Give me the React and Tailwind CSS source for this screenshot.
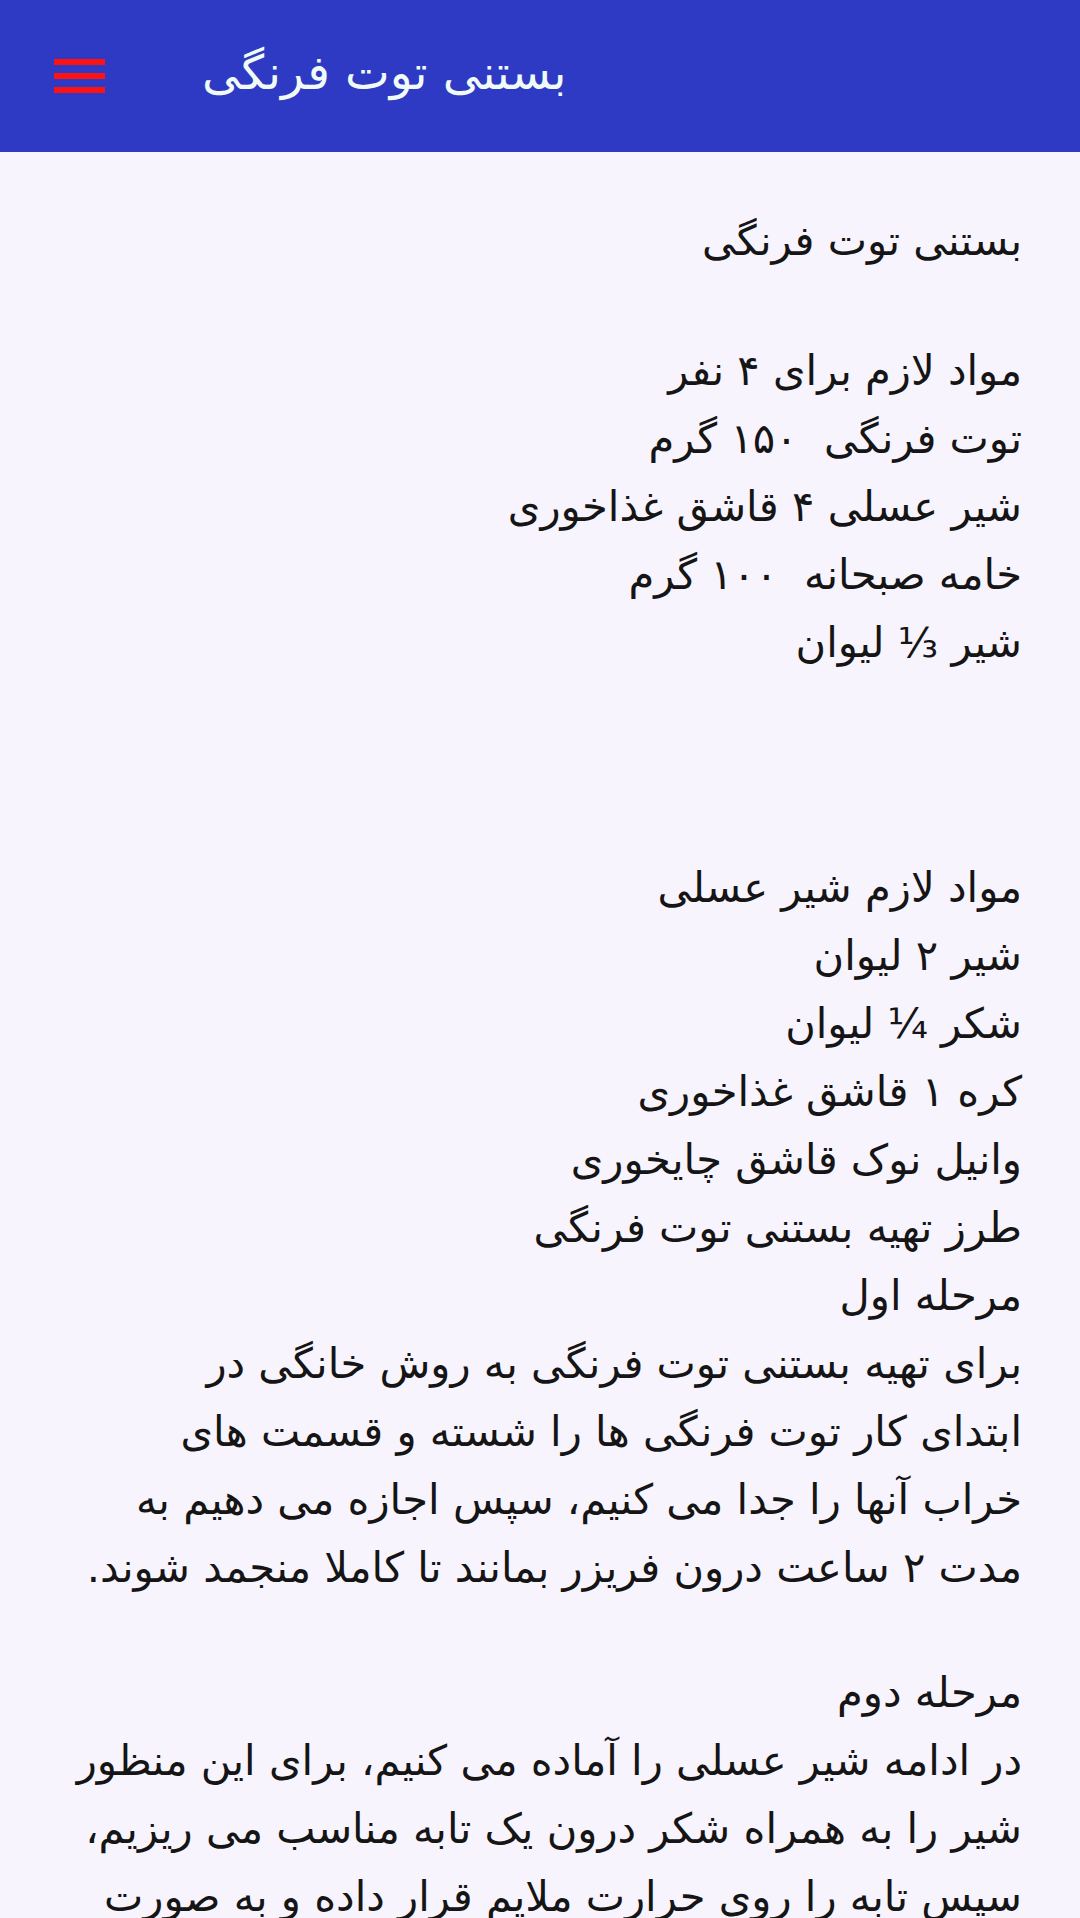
import React from "react";

const font = { fontFamily: '"DejaVu Sans", "Noto Sans", sans-serif' };

function Line({ children }) {
  return <div className="h-[68px] leading-[68px] whitespace-pre">{children}</div>;
}

export default function App() {
  return (
    <div className="min-h-screen bg-[#f8f4fe]" style={font}>
      <header className="flex h-[152px] items-center bg-[#2e39c4]">
        <button type="button" className="ml-[54px] flex w-[51px] flex-col gap-[8px]" aria-label="menu">
          <span className="block h-[6px] w-full bg-[#ff1212]" />
          <span className="block h-[6px] w-full bg-[#ff1212]" />
          <span className="block h-[6px] w-full bg-[#ff1212]" />
        </button>
        <h1 dir="rtl" className="mb-[6px] ml-[97px] text-[47.5px] leading-none text-[#f0fbf6]">
          بستنی توت فرنگی
        </h1>
      </header>

      <main dir="rtl" className="pr-[58px] pl-[30px] pt-[55px] text-[41.7px] text-[#151515]">
        <Line>بستنی توت فرنگی</Line>
        <div className="h-[62px]" />
        <Line>مواد لازم برای ۴ نفر</Line>
        <Line>توت فرنگی  ۱۵۰ گرم</Line>
        <Line>شیر عسلی ۴ قاشق غذاخوری</Line>
        <Line>خامه صبحانه  ۱۰۰ گرم</Line>
        <Line>شیر ⅓ لیوان</Line>
        <div className="h-[177px]" />
        <Line>مواد لازم شیر عسلی</Line>
        <Line>شیر ۲ لیوان</Line>
        <Line>شکر ¼ لیوان</Line>
        <Line>کره ۱ قاشق غذاخوری</Line>
        <Line>وانیل نوک قاشق چایخوری</Line>
        <Line>طرز تهیه بستنی توت فرنگی</Line>
        <Line>مرحله اول</Line>
        <Line>برای تهیه بستنی توت فرنگی به روش خانگی در</Line>
        <Line>ابتدای کار توت فرنگی ها را شسته و قسمت های</Line>
        <Line>خراب آنها را جدا می کنیم، سپس اجازه می دهیم به</Line>
        <Line>مدت ۲ ساعت درون فریزر بمانند تا کاملا منجمد شوند.</Line>
        <div className="h-[57px]" />
        <Line>مرحله دوم</Line>
        <Line>در ادامه شیر عسلی را آماده می کنیم، برای این منظور</Line>
        <Line>شیر را به همراه شکر درون یک تابه مناسب می ریزیم،</Line>
        <Line>سپس تابه را روی حرارت ملایم قرار داده و به صورت</Line>
        <Line>مداوم هم می زنیم تا شکر کاملا حل شود.</Line>
      </main>
    </div>
  );
}
